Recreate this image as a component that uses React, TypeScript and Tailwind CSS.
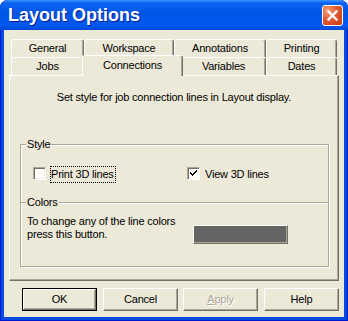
import React from "react";

const tabBase =
  "h-[18px] flex items-center justify-center bg-[#ECE9D8] border-t border-l border-white border-r border-r-[#716F64] shadow-[inset_-1px_0_0_#ACA899] rounded-t-[3px] shrink-0";

function Tab({ label, w }: { label: string; w: string }) {
  return <div className={`${tabBase} ${w}`}>{label}</div>;
}

function Box({ checked }: { checked?: boolean }) {
  return (
    <div className="w-[13px] h-[13px] shrink-0 border border-t-[#ACA899] border-l-[#ACA899] border-r-white border-b-white bg-white shadow-[inset_1px_1px_0_#716F64,inset_-1px_-1px_0_#F1EFE2] flex items-center justify-center">
      {checked && (
        <svg width="9" height="9" viewBox="0 0 9 9" shapeRendering="crispEdges">
          <path
            d="M1 3h1v1h1v1h1V4h1V3h1V2h1V1h1v2h-1v1h-1v1h-1v1h-1v1H3V6H2V5H1z"
            fill="#000"
          />
        </svg>
      )}
    </div>
  );
}

const btn =
  "w-[75px] h-[23px] shrink-0 flex items-center justify-center bg-[#ECE9D8] border border-t-white border-l-white border-r-[#716F64] border-b-[#716F64] shadow-[inset_-1px_-1px_0_#ACA899]";

export default function App() {
  return (
    <div className="w-[348px] h-[321px] bg-white">
      <div className="w-[348px] h-[321px] flex flex-col rounded-t-[8px] bg-[#0A4BDF] shadow-[inset_1px_0_0_#0019CF,inset_-1px_0_0_#0019CF,inset_0_-1px_0_#0019CF] font-['Liberation_Sans',Arial,sans-serif] text-[11px] leading-[13px] text-black tracking-[-0.2px]">
        {/* Title bar */}
        <div className="h-[30px] shrink-0 flex items-start rounded-t-[8px] bg-[linear-gradient(to_bottom,#3d95ff_0%,#0a64f0_10%,#0055e5_45%,#0058ee_85%,#0048d8_100%)] pl-[8px] pr-[5px]">
          <span className="mt-[5px] text-white font-bold text-[18px] leading-[20px] tracking-[0px] [text-shadow:1px_1px_0_#0A1E8F]">
            Layout Options
          </span>
          <div className="ml-auto mt-[5px] w-[21px] h-[21px] rounded-[3px] border border-white bg-[radial-gradient(circle_at_25%_25%,#F3A07A_0%,#E05A30_45%,#C53A12_100%)] flex items-center justify-center">
            <svg width="13" height="13" viewBox="0 0 13 13">
              <path d="M2.5 2.5L10.5 10.5M10.5 2.5L2.5 10.5" stroke="#fff" strokeWidth="2.4" strokeLinecap="square" />
            </svg>
          </div>
        </div>

        {/* Client */}
        <div className="flex-1 mx-[4px] mb-[4px] bg-[#ECE9D8] flex flex-col pt-[9px]">
          {/* Tabs row 1 */}
          <div className="flex ml-[7px] h-[18px]">
            <Tab label="General" w="w-[73px]" />
            <Tab label="Workspace" w="w-[90px]" />
            <Tab label="Annotations" w="w-[92px]" />
            <Tab label="Printing" w="w-[71px]" />
          </div>
          {/* Tabs row 2 */}
          <div className="flex ml-[7px] h-[18px]">
            <Tab label="Jobs" w="w-[73px]" />
            <div className="relative z-10 -mt-[2px] -mx-[2px] w-[101px] h-[21px] shrink-0 flex items-start justify-center pt-[3px] bg-[#ECE9D8] border-t border-l border-white border-r border-r-[#716F64] shadow-[inset_-1px_0_0_#ACA899] rounded-t-[3px]">
              Connections
            </div>
            <Tab label="Variables" w="w-[85px]" />
            <Tab label="Dates" w="w-[71px]" />
          </div>

          {/* Panel */}
          <div className="ml-[5px] w-[330px] h-[206px] shrink-0 flex flex-col border-t border-l border-white border-r border-b border-r-[#716F64] border-b-[#716F64] shadow-[inset_-1px_-1px_0_#ACA899]">
            <p className="mt-[15px] text-center">
              Set style for job connection lines in Layout display.
            </p>

            {/* Group box */}
            <div className="mt-[40px] ml-[10px] w-[309px] h-[123px] flex flex-col border border-[#ACA899] shadow-[inset_1px_1px_0_#fff,1px_1px_0_#fff]">
              <div className="-mt-[7px] ml-[5px] px-[1px] w-fit bg-[#ECE9D8]">Style</div>

              <div className="mt-[15px] pl-[12px] flex items-start h-[16px]">
                <div className="w-[154px] flex items-start">
                  <div className="mt-[1px]">
                    <Box />
                  </div>
                  <div className="ml-[4px] border border-dotted border-black py-[1px] pr-[1px]">
                    Print 3D lines
                  </div>
                </div>
                <div className="flex items-start">
                  <div className="mt-[1px]">
                    <Box checked />
                  </div>
                  <div className="ml-[5px] py-[2px] pl-[0px]">View 3D lines</div>
                </div>
              </div>

              {/* Colors divider */}
              <div className="mt-[20px] h-[2px] border-t border-[#ACA899] bg-white" />
              <div className="-mt-[8px] ml-[5px] px-[1px] w-fit bg-[#ECE9D8]">Colors</div>

              <div className="mt-[6px] ml-[6px] flex items-start">
                <div className="w-[166px]">
                  <div>To change any of the line colors</div>
                  <div>press this button.</div>
                </div>
                <div className="mt-[10px] w-[95px] h-[19px] bg-[#646464] border border-t-white border-l-white border-r-[#716F64] border-b-[#716F64] shadow-[inset_-1px_-1px_0_#ACA899]" />
              </div>
            </div>
          </div>

          {/* Buttons */}
          <div className="mt-[7px] flex ml-[18px]">
            <div className="w-[75px] h-[23px] shrink-0 border border-black">
              <div className="w-full h-full flex items-center justify-center border border-t-white border-l-white border-r-[#716F64] border-b-[#716F64] shadow-[inset_-1px_-1px_0_#ACA899]">
                OK
              </div>
            </div>
            <div className={`${btn} ml-[6px]`}>Cancel</div>
            <div className={`${btn} ml-[5px] text-[#ACA899] [text-shadow:1px_1px_0_#fff]`}>
              <span>
                <span className="underline underline-offset-[1px]">A</span>pply
              </span>
            </div>
            <div className={`${btn} ml-[6px]`}>Help</div>
          </div>
        </div>
      </div>
    </div>
  );
}
